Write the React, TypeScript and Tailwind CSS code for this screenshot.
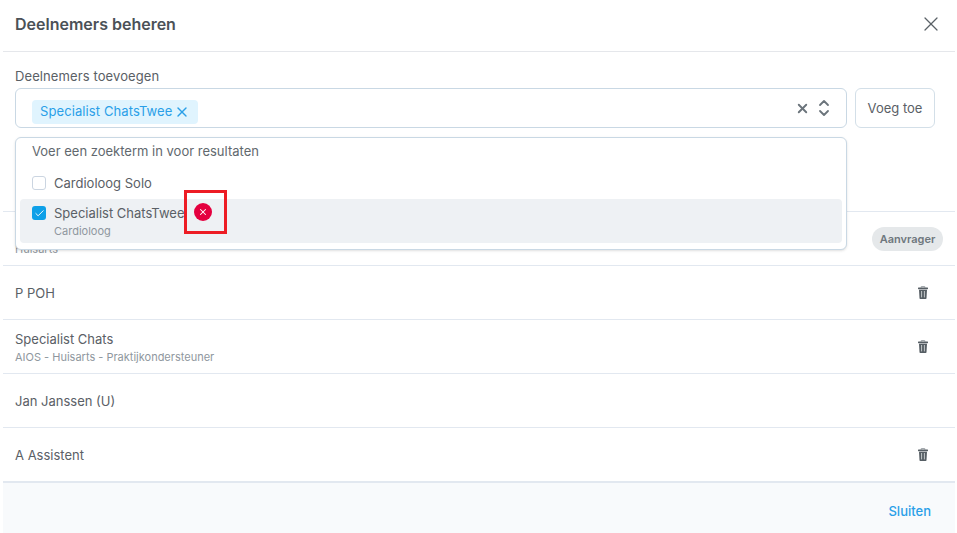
import { X, Check, ChevronUp, ChevronDown } from 'lucide-react';

function TrashIcon() {
  return (
    <svg width="10" height="13" viewBox="0 0 10 13" className="text-[#565e64]">
      <path d="M3.2 1.6V.6h3.6v1" fill="none" stroke="#9ba1a6" strokeWidth="1" />
      <rect x="0" y="1.6" width="10" height="1.6" rx=".4" fill="currentColor" />
      <path d="M1 3.8h8l-.5 8.4a.8.8 0 0 1-.8.8H2.3a.8.8 0 0 1-.8-.8z" fill="currentColor" />
      <path d="M3.6 5v6.4M6.4 5v6.4" stroke="#c4c8cb" strokeWidth="1" />
    </svg>
  );
}

function Row({ name, sub, trash }: { name: string; sub?: string; trash?: boolean }) {
  return (
    <div className="flex h-[54px] items-center justify-between border-b border-[#e2e8f0] pl-3 pr-[27px]">
      <div>
        <div className="text-[13px] leading-[18px] text-[#5a6066]">{name}</div>
        {sub && <div className="mt-[2px] text-[11px] leading-[14px] text-[#8f979e]">{sub}</div>}
      </div>
      {trash && <TrashIcon />}
    </div>
  );
}

export default function App() {
  return (
    <div className="h-[533px] w-[957px] overflow-hidden bg-white px-[3px] font-['Inter',sans-serif]">
      <div className="relative flex h-[533px] w-[952px] flex-col">
        <header className="flex h-[52px] shrink-0 items-center justify-between border-b border-[#e5e7eb] pb-[3px] pl-3 pr-3">
          <h1 className="text-[16px] font-semibold text-[#4b5157]">Deelnemers beheren</h1>
          <X className="h-6 w-6 text-[#5a6167]" strokeWidth={1.25} />
        </header>

        <section className="relative h-[160px] shrink-0 border-b border-[#e2e8f0] px-3 pt-4">
          <label className="block text-[13px] leading-4 tracking-[0.1px] text-[#5a6066]">Deelnemers toevoegen</label>
          <div className="mt-1 flex gap-2">
            <div className="flex h-10 w-[832px] items-center justify-between rounded-md border border-[#c9d8e4] pl-4 pr-[14px]">
              <span className="mt-[8px] flex h-6 items-center gap-[2px] rounded bg-[#e0f4fe] pl-2 pr-2 text-[13px] tracking-[0.1px] text-[#2a9fe8]">
                Specialist ChatsTwee
                <X className="h-4 w-4" strokeWidth={2} />
              </span>
              <span className="flex items-center gap-[6px] text-[#6b747b]">
                <X className="h-[15px] w-[15px]" strokeWidth={3} />
                <span className="flex flex-col">
                  <ChevronUp className="-mb-[3px] h-4 w-4" strokeWidth={2.75} />
                  <ChevronDown className="-mt-[3px] h-4 w-4" strokeWidth={2.75} />
                </span>
              </span>
            </div>
            <button className="h-10 w-20 rounded-md border border-[#d3dfe8] pt-[1px] text-[13px] text-[#5a6066]">Voeg toe</button>
          </div>

          {/* dropdown lies over the first row */}
          <div className="absolute left-3 top-[85px] z-10 h-[113px] w-[832px] rounded-md border border-[#c9d8e4] bg-white px-1 shadow-sm">
            <div className="pl-3 pt-[5px] text-[13px] leading-4 text-[#61686e]">Voer een zoekterm in voor resultaten</div>
            <div className="mt-[10px] flex h-[30px] items-center gap-2 pl-3 text-[13px] text-[#5a6066]">
              <span className="-mt-[2px] h-[14px] w-[14px] rounded-[3px] border border-[#cbd5e1] bg-white" />
              Cardioloog Solo
            </div>
            <div className="h-[44px] rounded bg-[#eef1f4] pl-3 pt-[6px]">
              <div className="flex items-center gap-2 text-[13px] leading-4 text-[#5a6066]">
                <span className="flex h-[14px] w-[14px] items-center justify-center rounded-[3px] bg-[#0ea0e8]">
                  <Check className="h-[11px] w-[11px] text-white" strokeWidth={2} />
                </span>
                Specialist ChatsTwee
              </div>
              <div className="ml-[22px] mt-[3px] text-[11px] leading-[14px] text-[#8f979e]">Cardioloog</div>
            </div>
          </div>
        </section>

        <div className="relative flex h-[54px] shrink-0 items-end justify-between border-b border-[#e2e8f0] pl-3 pr-3">
          <div className="pb-[9px] text-[11px] leading-[14px] text-[#8f979e]">Huisarts</div>
          <span className="absolute right-3 top-[15px] flex h-6 w-[71px] items-center justify-center rounded-full bg-[#e5e8ea] text-[11px] font-semibold text-[#6f777d]">
            Aanvrager
          </span>
        </div>
        <Row name="P POH" trash />
        <Row name="Specialist Chats" sub="AIOS - Huisarts - Praktijkondersteuner" trash />
        <Row name="Jan Janssen (U)" />
        <Row name="A Assistent" trash />

        <footer className="flex grow items-center justify-end border-t border-[#e2e8f0] bg-[#f8fafc] pr-6 pt-[8px]">
          <span className="text-[13px] font-medium text-[#2a9fe8]">Sluiten</span>
        </footer>

        {/* red annotation box from the screenshot */}
        <div className="absolute left-[181px] top-[190px] z-20 flex h-[44px] w-[43px] items-center border-[3px] border-[#ed1c24] pl-[7px]">
          <span className="flex h-[18px] w-[18px] items-center justify-center rounded-full bg-[#e4003f]">
            <X className="h-[10px] w-[10px] text-white" strokeWidth={2.5} />
          </span>
        </div>
      </div>
    </div>
  );
}
